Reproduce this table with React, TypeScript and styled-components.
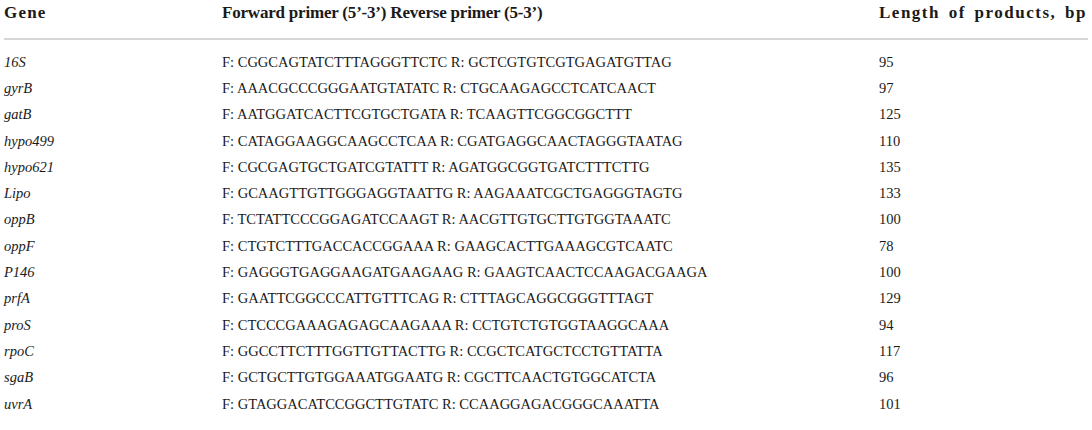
import styled, { createGlobalStyle } from "styled-components";

const GlobalStyle = createGlobalStyle`
  html, body {
    margin: 0;
    padding: 0;
    background: #ffffff;
  }
`;

const rows: [string, string, string][] = [
  ["16S", "F: CGGCAGTATCTTTAGGGTTCTC R: GCTCGTGTCGTGAGATGTTAG", "95"],
  ["gyrB", "F: AAACGCCCGGGAATGTATATC R: CTGCAAGAGCCTCATCAACT", "97"],
  ["gatB", "F: AATGGATCACTTCGTGCTGATA R: TCAAGTTCGGCGGCTTT", "125"],
  ["hypo499", "F: CATAGGAAGGCAAGCCTCAA R: CGATGAGGCAACTAGGGTAATAG", "110"],
  ["hypo621", "F: CGCGAGTGCTGATCGTATTT R: AGATGGCGGTGATCTTTCTTG", "135"],
  ["Lipo", "F: GCAAGTTGTTGGGAGGTAATTG R: AAGAAATCGCTGAGGGTAGTG", "133"],
  ["oppB", "F: TCTATTCCCGGAGATCCAAGT R: AACGTTGTGCTTGTGGTAAATC", "100"],
  ["oppF", "F: CTGTCTTTGACCACCGGAAA R: GAAGCACTTGAAAGCGTCAATC", "78"],
  ["P146", "F: GAGGGTGAGGAAGATGAAGAAG R: GAAGTCAACTCCAAGACGAAGA", "100"],
  ["prfA", "F: GAATTCGGCCCATTGTTTCAG R: CTTTAGCAGGCGGGTTTAGT", "129"],
  ["proS", "F: CTCCCGAAAGAGAGCAAGAAA R: CCTGTCTGTGGTAAGGCAAA", "94"],
  ["rpoC", "F: GGCCTTCTTTGGTTGTTACTTG R: CCGCTCATGCTCCTGTTATTA", "117"],
  ["sgaB", "F: GCTGCTTGTGGAAATGGAATG R: CGCTTCAACTGTGGCATCTA", "96"],
  ["uvrA", "F: GTAGGACATCCGGCTTGTATC R: CCAAGGAGACGGGCAAATTA", "101"],
];

const Table = styled.div`
  width: 1092px;
  padding: 0 4px;
  box-sizing: border-box;
  font-family: "Liberation Serif", "Times New Roman", serif;
  color: #1a1a1a;
`;

const Row = styled.div<{ $head?: boolean }>`
  display: grid;
  grid-template-columns: 218px 657px 1fr;
  align-items: center;
  height: ${(p) => (p.$head ? "26px" : "26.3px")};
  font-size: ${(p) => (p.$head ? "17px" : "14.5px")};
  font-weight: ${(p) => (p.$head ? 700 : 400)};
  white-space: nowrap;
`;

const HeadRule = styled.div`
  height: 2px;
  background: #d6d6d6;
  margin: 12px 0 9px;
`;

const HeadCell = styled.span<{ $spacing?: number; $words?: number }>`
  letter-spacing: ${(p) => p.$spacing ?? 0}px;
  word-spacing: ${(p) => p.$words ?? 0}px;
`;

const GeneCell = styled.span`
  font-style: italic;
`;

const Cell = styled.span``;

export default function App() {
  return (
    <>
      <GlobalStyle />
      <Table>
        <Row $head>
          <HeadCell $spacing={1.2}>Gene</HeadCell>
          <HeadCell $spacing={-0.2}>Forward primer (5’-3’) Reverse primer (5-3’)</HeadCell>
          <HeadCell $spacing={1.5} $words={3}>Length of products, bp</HeadCell>
        </Row>
        <HeadRule />
        {rows.map(([gene, primers, len]) => (
          <Row key={gene}>
            <GeneCell>{gene}</GeneCell>
            <Cell>{primers}</Cell>
            <Cell>{len}</Cell>
          </Row>
        ))}
      </Table>
    </>
  );
}
